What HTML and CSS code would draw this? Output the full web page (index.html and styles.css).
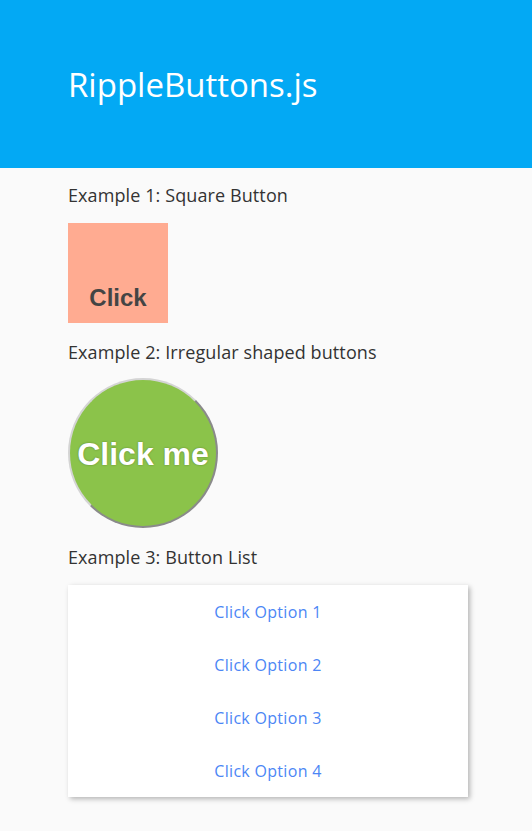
FILE: index.html
```html
<!DOCTYPE html>
<html>
<head>
<meta charset="utf-8">
<link rel="stylesheet" href="styles.css">
</head>
<body>
<header class="header"><h1 class="title">RippleButtons.js</h1></header>
<main class="content">
  <p class="label label-first">Example 1: Square Button</p>
  <button class="square-btn">Click</button>
  <p class="label">Example 2: Irregular shaped buttons</p>
  <button class="circle-btn">Click me</button>
  <p class="label">Example 3: Button List</p>
  <ul class="list">
    <li class="list-item">Click Option 1</li>
    <li class="list-item">Click Option 2</li>
    <li class="list-item">Click Option 3</li>
    <li class="list-item">Click Option 4</li>
  </ul>
</main>
</body>
</html>
```
FILE: styles.css
```css
html, body {
  margin: 0;
  padding: 0;
  background: #fafafa;
  font-family: "Open Sans", "Noto Sans", sans-serif;
  color: #333;
}
.header {
  background: #03a9f4;
  height: 168px;
  display: flex;
  align-items: center;
  padding-left: 68px;
  box-sizing: border-box;
}
.title {
  margin: 0;
  color: #fff;
  font-weight: 400;
  font-size: 33px;
  line-height: 1;
}
.content {
  padding-left: 68px;
  display: flex;
  flex-direction: column;
  align-items: flex-start;
}
.label {
  margin: 0;
  font-size: 18px;
  letter-spacing: 0.1px;
  line-height: 24px;
  padding: 17px 0 16px;
}
.label-first {
  padding-top: 15px;
}
.square-btn {
  width: 100px;
  height: 100px;
  border: none;
  background: #ffab91;
  color: #444;
  font-family: "Liberation Sans", Arial, sans-serif;
  font-weight: 700;
  font-size: 24px;
  display: flex;
  align-items: flex-end;
  justify-content: center;
  padding: 0 0 11px;
  box-sizing: border-box;
  margin: 0;
}
.circle-btn {
  width: 150px;
  height: 150px;
  border-radius: 50%;
  background: #8bc34a;
  border: 2px solid;
  border-color: #d4d4d4 #8a8a8a #8a8a8a #d4d4d4;
  color: #fff;
  font-family: "Liberation Sans", Arial, sans-serif;
  font-weight: 700;
  font-size: 32px;
  padding: 2px 0 0;
  margin: -2px 0 0;
  box-sizing: border-box;
  text-shadow: 0 0 2px rgba(0,0,0,0.35);
  white-space: nowrap;
}
.list {
  list-style: none;
  margin: 0 0 34px;
  padding: 0;
  width: 400px;
  background: #fff;
  box-shadow: 2px 2px 5px rgba(0,0,0,0.28);
}
.list-item {
  height: 53px;
  display: flex;
  align-items: center;
  justify-content: center;
  color: #4c86f5;
  font-size: 16px;
  letter-spacing: 0.3px;
}
```
